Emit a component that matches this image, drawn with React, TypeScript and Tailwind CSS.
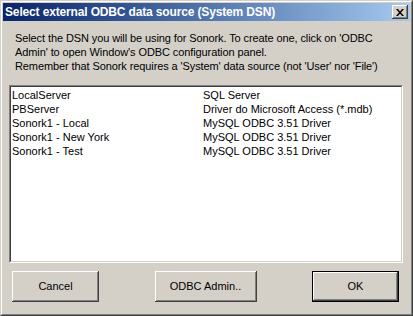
const rows = [
  ["LocalServer", "SQL Server"],
  ["PBServer", "Driver do Microsoft Access (*.mdb)"],
  ["Sonork1 - Local", "MySQL ODBC 3.51 Driver"],
  ["Sonork1 - New York", "MySQL ODBC 3.51 Driver"],
  ["Sonork1 - Test", "MySQL ODBC 3.51 Driver"],
];

const raised =
  "shadow-[inset_-1px_-1px_#404040,inset_1px_1px_#ffffff,inset_-2px_-2px_#808080,inset_2px_2px_#d4d0c8]";

export default function App() {
  return (
    <div className="w-[413px] h-[316px] bg-[#d4d0c8] border border-t-[#d4d0c8] border-l-[#d4d0c8] border-r-[#404040] border-b-[#404040] font-['Liberation_Sans',Arial,sans-serif] text-[11px] text-black">
      <div className="w-full h-full border border-t-white border-l-white border-r-[#808080] border-b-[#808080] p-px flex flex-col">
        {/* title bar */}
        <div className="h-[18px] flex items-center justify-between bg-gradient-to-r from-[#0a246a] to-[#a6caf0] pl-[2px] pr-[2px]">
          <span className="text-white font-bold text-[12px] leading-none tracking-[-0.15px]">
            Select external ODBC data source (System DSN)
          </span>
          <div className={`w-[16px] h-[14px] bg-[#d4d0c8] flex items-center justify-center ${raised}`}>
            <svg width="8" height="7" viewBox="0 0 8 7">
              <path d="M0 0h2l2 2.5L6 0h2L5 3.5 8 7H6L4 4.5 2 7H0l3-3.5z" fill="#000" />
            </svg>
          </div>
        </div>

        {/* description */}
        <div className="ml-[12px] mt-[10px] leading-[14px] tracking-[-0.1px]">
          <p>Select the DSN you will be using for Sonork. To create one, click on 'ODBC</p>
          <p>Admin' to open Window's ODBC configuration panel.</p>
          <p>Remember that Sonork requires a 'System' data source (not 'User' nor 'File')</p>
        </div>

        {/* list */}
        <div className="ml-[6px] mt-[12px] w-[394px] h-[178px] bg-white border border-t-[#808080] border-l-[#808080] border-r-white border-b-white">
          <div className="w-full h-full border border-t-[#404040] border-l-[#404040] border-r-[#d4d0c8] border-b-[#d4d0c8] pt-px pl-px">
            {rows.map(([name, driver]) => (
              <div key={name} className="flex h-[14px] leading-[14px]">
                <span className="w-[191px]">{name}</span>
                <span>{driver}</span>
              </div>
            ))}
          </div>
        </div>

        {/* buttons */}
        <div className="ml-[9px] mt-[8px] w-[387px] flex justify-between">
          <button className={`w-[87px] h-[31px] bg-[#d4d0c8] ${raised}`}>Cancel</button>
          <button className={`w-[102px] h-[31px] bg-[#d4d0c8] ${raised}`}>ODBC Admin..</button>
          <button className="w-[87px] h-[31px] bg-[#d4d0c8] border border-black shadow-[inset_-1px_-1px_#404040,inset_1px_1px_#ffffff,inset_-2px_-2px_#808080,inset_2px_2px_#d4d0c8]">
            OK
          </button>
        </div>
      </div>
    </div>
  );
}
